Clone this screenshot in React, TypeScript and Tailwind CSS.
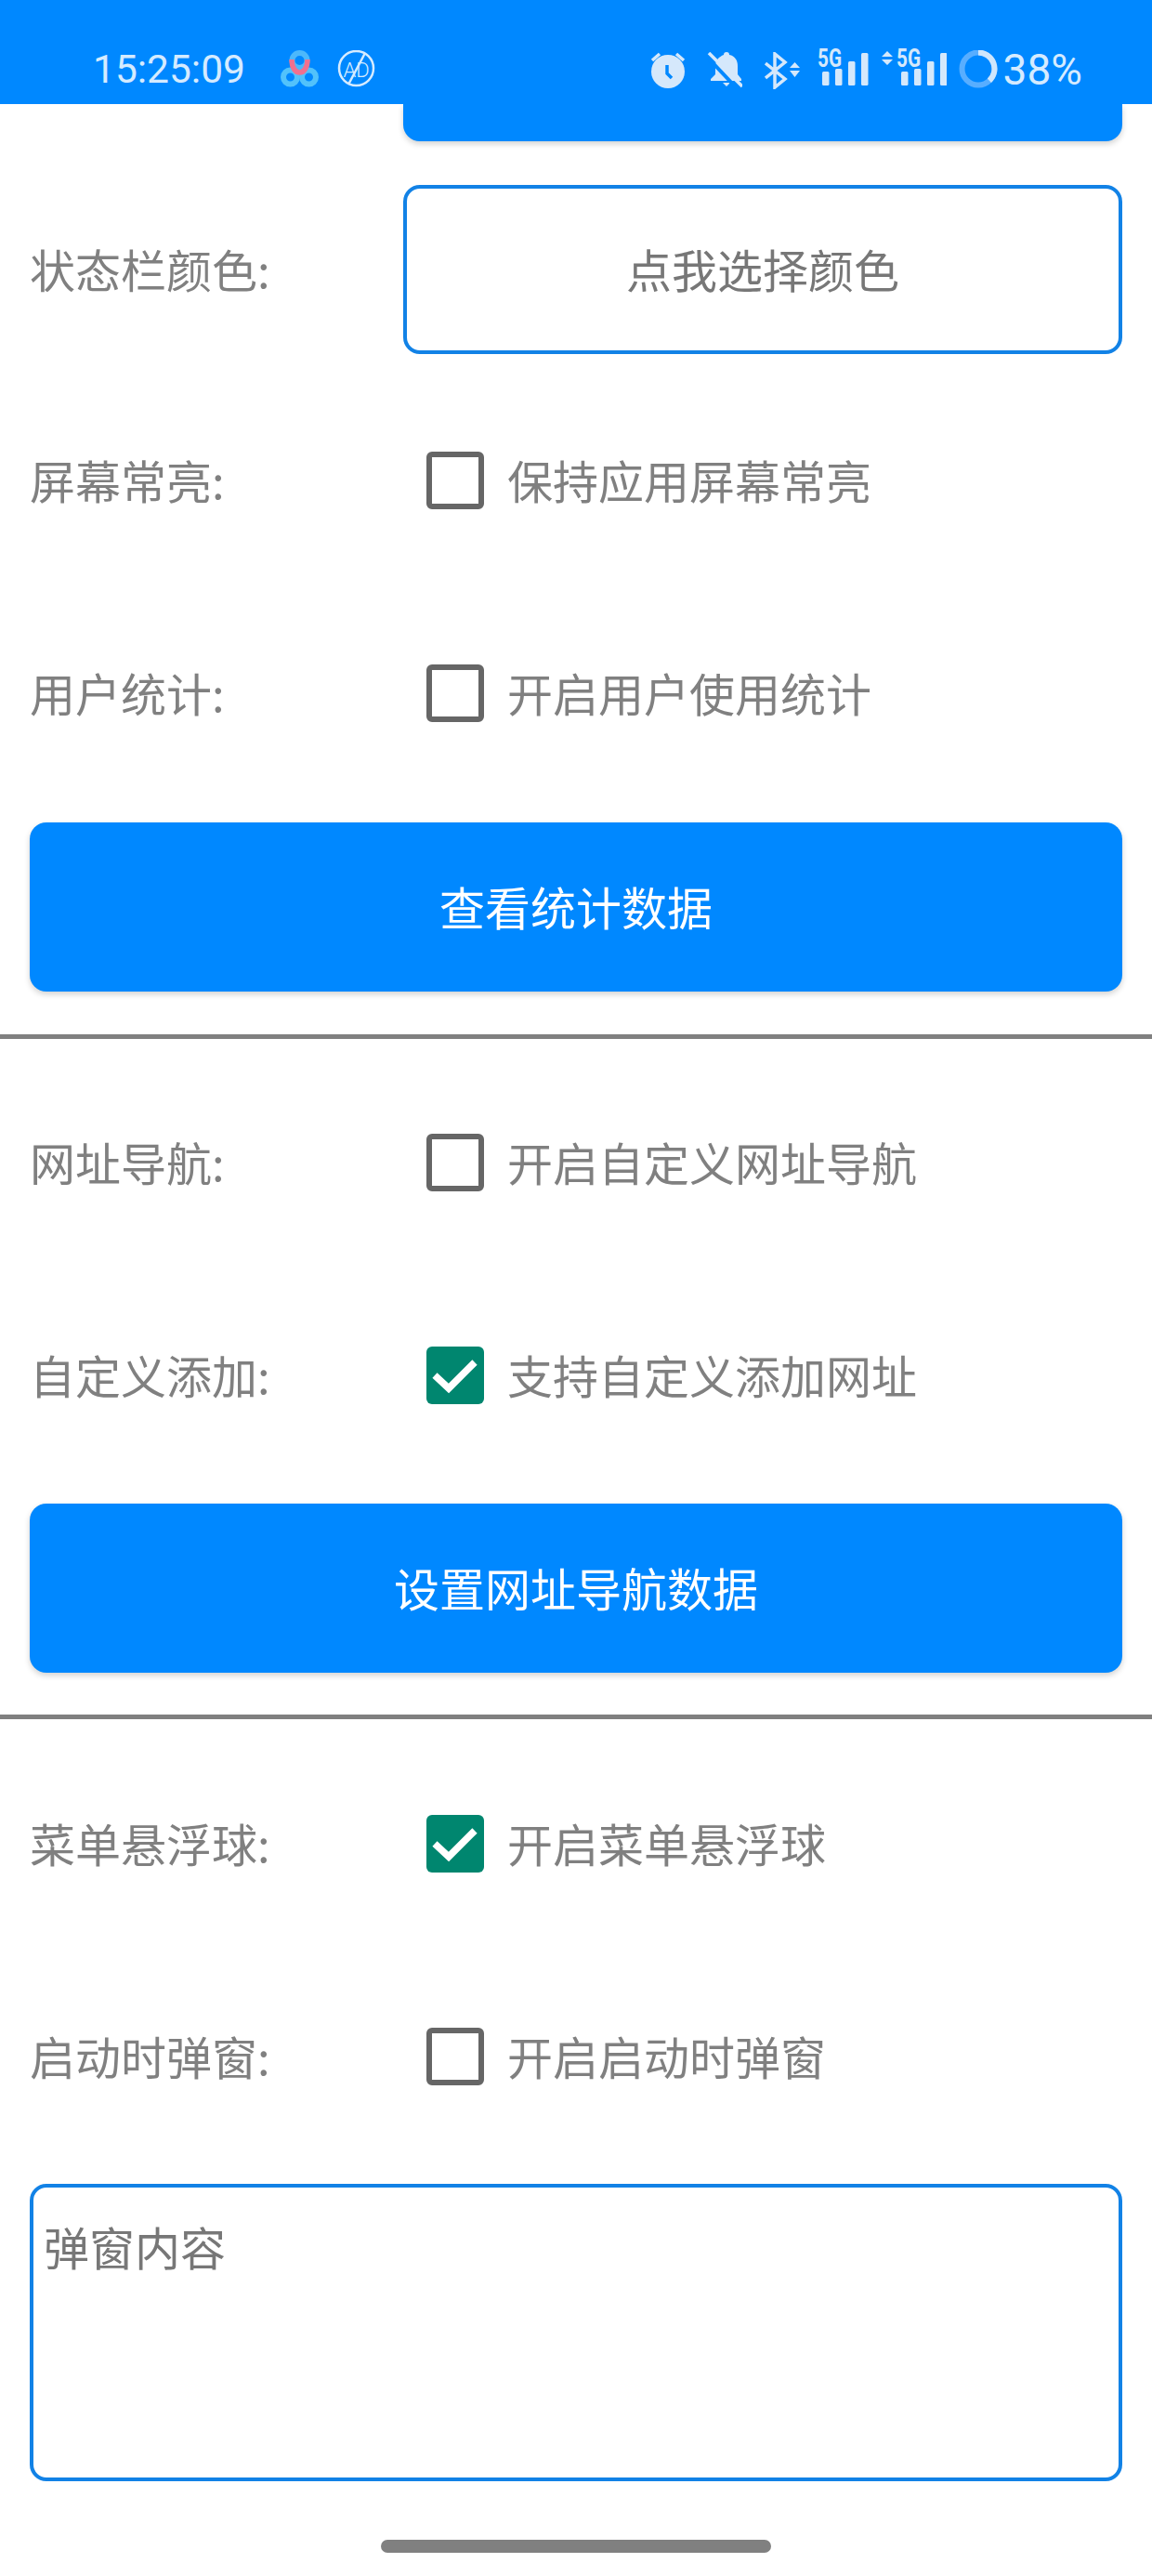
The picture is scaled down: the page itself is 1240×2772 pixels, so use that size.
import React from 'react';

const FONT = "font-['Noto_Sans_CJK_SC',sans-serif]";

const BaiduIcon = () => (
  <svg width="42" height="42" viewBox="0 0 42 42" fill="none" className="shrink-0">
    <circle cx="20.5" cy="11" r="8" stroke="#4cb8fb" strokeWidth="6" />
    <circle cx="10.5" cy="29" r="7.5" stroke="#52c2fb" strokeWidth="6" />
    <circle cx="30.5" cy="29" r="7.5" stroke="#52c2fb" strokeWidth="6" />
    <path d="M12 10c0 9 4 14 8.500 14s8.500-5 8.500-14" stroke="#f0708f" strokeWidth="5.500" />
  </svg>
);

const NoAdIcon = () => (
  <svg width="42" height="42" viewBox="0 0 42 42" fill="none" className="shrink-0">
    <circle cx="20.5" cy="19.5" r="18.5" stroke="#d5ebff" strokeWidth="2.5" />
    <path d="M30 3 12 37" stroke="#d5ebff" strokeWidth="2.5" />
    <text x="20.5" y="29" textAnchor="middle" fontSize="22" fontWeight="300" fill="#d5ebff" fontFamily="Roboto, sans-serif">AD</text>
  </svg>
);

const AlarmIcon = () => (
  <svg width="38" height="40" viewBox="0 0 38 40" className="shrink-0">
    <circle cx="19" cy="21" r="18" fill="#d5e8fb" />
    <path d="M2 9 10 2M36 9 28 2" stroke="#d5e8fb" strokeWidth="3.5" />
    <path d="M18 14v9l5 5" stroke="#0088ff" strokeWidth="3.5" fill="none" />
  </svg>
);

const BellOffIcon = () => (
  <svg width="38" height="40" viewBox="0 0 38 40" className="shrink-0">
    <path d="M21 0c2 0 3 1 3 3 6 1 9 6 9 12v9l4 5v2H4v-2l5-5v-9c0-6 4-10 9-12 0-2 1-3 3-3z" fill="#d5e8fb" />
    <path d="M17 33h8l-4 4z" fill="#d5e8fb" />
    <path d="M-1 4 33 40" stroke="#0088ff" strokeWidth="4" />
    <path d="M2 1 38 37" stroke="#d5e8fb" strokeWidth="3.5" />
  </svg>
);

const BluetoothIcon = () => (
  <svg width="40" height="40" viewBox="0 0 40 40" fill="none" className="shrink-0">
    <path d="M1 12 22 29 11 38V2l11 9L1 28" stroke="#d5e8fb" strokeWidth="3.5" />
    <path d="M27 17 32.5 11l5.5 6zM27 20h11l-5.5 7z" fill="#d5e8fb" />
  </svg>
);

const SignalIcon = ({ arrows }: { arrows?: boolean }) => (
  <svg width={arrows ? 70 : 55} height="52" viewBox={`0 -6 ${arrows ? 70 : 55} 52`} className="shrink-0">
    {arrows && <path d="M0 11 6 5l6 6zM0 14h12l-6 6z" fill="#d5e8fb" />}
    <g transform={arrows ? 'translate(16 0)' : undefined}>
      <text x="0" y="22" fontSize="28" fontWeight="700" fill="#d5e8fb" fontFamily="Roboto, sans-serif" textLength="26" lengthAdjust="spacingAndGlyphs">5G</text>
      <rect x="5" y="27" width="7.5" height="15" rx="1.5" fill="#d5e8fb" />
      <rect x="19" y="24" width="7.5" height="18" rx="1.5" fill="#d5e8fb" />
      <rect x="33" y="16" width="7.5" height="26" rx="1.5" fill="#d5e8fb" />
      <rect x="47" y="7" width="7.5" height="35" rx="1.5" fill="#d5e8fb" />
    </g>
  </svg>
);

const BatteryRing = () => (
  <svg width="42" height="42" viewBox="0 0 42 42" fill="none" className="shrink-0">
    <circle cx="21" cy="20" r="17.5" stroke="#58aeff" strokeWidth="6" />
    <path d="M21 2.5A17.5 17.5 0 0 1 32.9 32.8" stroke="#cfe6fc" strokeWidth="6" />
  </svg>
);

const Checkbox = ({ checked }: { checked?: boolean }) =>
  checked ? (
    <div className="w-[62px] h-[62px] shrink-0 rounded-[6px] bg-[#00866f]">
      <svg width="62" height="62" viewBox="0 0 62 62" fill="none">
        <path d="M9 31 24 45 52 17" stroke="#fff" strokeWidth="7.5" />
      </svg>
    </div>
  ) : (
    <div className="w-[62px] h-[62px] shrink-0 rounded-[6px] border-[6px] border-[#666666]" />
  );

const CheckRow = ({ label, text, checked, className }: { label: string; text: string; checked?: boolean; className: string }) => (
  <div className={`flex items-center h-[62px] ${className}`}>
    <span className="w-[427px] shrink-0 pb-[3px] text-[49px] leading-none text-[#808080]">{label}</span>
    <Checkbox checked={checked} />
    <span className="ml-[25px] pb-[3px] text-[49px] leading-none text-[#808080]">{text}</span>
  </div>
);

const BlueButton = ({ text, className }: { text: string; className: string }) => (
  <button className={`w-full h-[182px] pb-[3px] rounded-[18px] bg-[#0088ff] text-white text-[49px] leading-none shadow-[0_3px_6px_rgba(0,0,0,0.18)] ${className}`}>
    {text}
  </button>
);

export default function App() {
  return (
    <div className={`w-[1240px] h-[2772px] overflow-hidden bg-white flex flex-col ${FONT}`}>
      {/* status bar */}
      <div className="h-[112px] shrink-0 bg-[#0088ff] flex items-end pb-[16px] pl-[100px] pr-[75px] relative z-10">
        <span className="font-['Roboto',sans-serif] text-[42.5px] leading-[42px] text-[#d5ebff] w-[202px]">15:25:09</span>
        <BaiduIcon />
        <div className="ml-[19px]"><NoAdIcon /></div>
        <div className="flex-1" />
        <AlarmIcon />
        <div className="ml-[23px]"><BellOffIcon /></div>
        <div className="ml-[24px]"><BluetoothIcon /></div>
        <div className="ml-[17px]"><SignalIcon /></div>
        <div className="ml-[14px]"><SignalIcon arrows /></div>
        <div className="ml-[13px]"><BatteryRing /></div>
        <span className="ml-[6px] font-['Roboto',sans-serif] text-[46px] leading-[42px] text-[#d5ebff]">38%</span>
      </div>

      <div className="px-[32px] flex flex-col">
        {/* end of the button scrolled under the status bar */}
        <div className="ml-[402px] h-[40px] rounded-b-[18px] bg-[#0088ff] shadow-[0_3px_6px_rgba(0,0,0,0.18)]" />

        <div className="flex items-center mt-[47px]">
          <span className="w-[402px] shrink-0 pb-[3px] text-[49px] leading-none text-[#808080]">状态栏颜色:</span>
          <div className="flex-1 h-[182px] pb-[3px] rounded-[18px] border-[4px] border-[#1282e6] flex items-center justify-center text-[49px] leading-none text-[#777777]">
            点我选择颜色
          </div>
        </div>

        <CheckRow label="屏幕常亮:" text="保持应用屏幕常亮" className="mt-[105px]" />
        <CheckRow label="用户统计:" text="开启用户使用统计" className="mt-[167px]" />
        <BlueButton text="查看统计数据" className="mt-[108px]" />
        <div className="-mx-[32px] mt-[46px] h-[5px] bg-[#808080]" />

        <CheckRow label="网址导航:" text="开启自定义网址导航" className="mt-[102px]" />
        <CheckRow label="自定义添加:" text="支持自定义添加网址" checked className="mt-[167px]" />
        <BlueButton text="设置网址导航数据" className="mt-[107px]" />
        <div className="-mx-[32px] mt-[45px] h-[5px] bg-[#808080]" />

        <CheckRow label="菜单悬浮球:" text="开启菜单悬浮球" checked className="mt-[103px]" />
        <CheckRow label="启动时弹窗:" text="开启启动时弹窗" className="mt-[167px]" />

        <div className="mt-[106px] h-[320px] rounded-[18px] border-[4px] border-[#1282e6] px-[11px] pt-[38px] text-[49px] leading-none text-[#777777]">
          弹窗内容
        </div>
      </div>

      <div className="mt-[63px] mx-auto w-[420px] h-[14px] shrink-0 rounded-full bg-[#808080]" />
    </div>
  );
}
